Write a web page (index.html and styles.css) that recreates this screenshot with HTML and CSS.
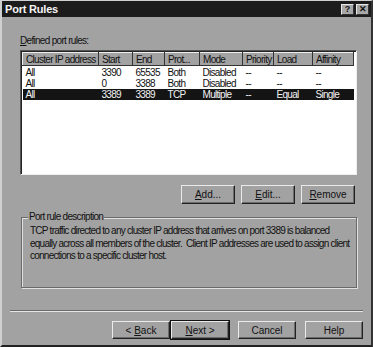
FILE: index.html
```html
<!DOCTYPE html>
<html lang="en">
  <head>
    <meta charset="UTF-8" />
    <title>Port Rules</title>
    <link rel="stylesheet" href="styles.css">
  </head>
  <body>
    <div class="dialog">
      <div class="titlebar">
        <span class="title">Port Rules</span>
        <div class="caption-buttons">
          <span class="cap-btn">?</span>
          <span class="cap-btn">&#x2715;</span>
        </div>
      </div>

      <div class="content">
        <div class="list-label"><u>D</u>efined port rules:</div>

        <!-- port rules list -->
        <div class="listbox">
          <table class="rules">
            <thead>
              <tr>
                <th class="c-ip">Cluster IP address</th>
                <th class="c-start">Start</th>
                <th class="c-end">End</th>
                <th class="c-prot">Prot...</th>
                <th class="c-mode">Mode</th>
                <th class="c-prio">Priority</th>
                <th class="c-load">Load</th>
                <th class="c-aff">Affinity</th>
              </tr>
            </thead>
            <tbody>
              <tr>
                <td>All</td><td>3390</td><td>65535</td><td>Both</td><td>Disabled</td><td>--</td><td>--</td><td>--</td>
              </tr>
              <tr>
                <td>All</td><td>0</td><td>3388</td><td>Both</td><td>Disabled</td><td>--</td><td>--</td><td>--</td>
              </tr>
              <tr class="selected">
                <td>All</td><td>3389</td><td>3389</td><td>TCP</td><td>Multiple</td><td>--</td><td>Equal</td><td>Single</td>
              </tr>
            </tbody>
          </table>
        </div>

        <div class="list-actions">
          <button class="btn"><u>A</u>dd...</button>
          <button class="btn"><u>E</u>dit...</button>
          <button class="btn"><u>R</u>emove</button>
        </div>

        <div class="group">
          <span class="group-title">Port rule description</span>
          <p>TCP traffic directed to any cluster IP address that arrives on port 3389 is balanced<br>
          equally across all members of the cluster.&nbsp; Client IP addresses are used to assign client<br>
          connections to a specific cluster host.</p>
        </div>
      </div>

      <div class="separator"></div>

      <div class="footer">
        <button class="btn wide">&lt; <u>B</u>ack</button>
        <button class="btn wide default"><u>N</u>ext &gt;</button>
        <button class="btn wide gap">Cancel</button>
        <button class="btn wide gap">Help</button>
      </div>
    </div>
  </body>
</html>
```

FILE: styles.css
```css
body {
  margin: 0;
  background: #a2a2a2;
  font-family: "Liberation Sans", Arial, sans-serif;
  font-size: 10px;
  letter-spacing: -0.7px;
  color: #111;
}

.dialog {
  width: 373px;
  height: 347px;
  box-sizing: border-box;
  background: #a2a2a2;
  border-left: 2px solid #d0d0d0;
  border-top: 1px solid #d0d0d0;
  border-bottom: 2px solid #222;
  border-right: 2px solid #333;
  display: flex;
  flex-direction: column;
}

.titlebar {
  height: 16px;
  background: #1c1c1c;
  display: flex;
  align-items: center;
  justify-content: space-between;
  padding: 0 2px 0 2px;
}

.title {
  color: #f4f4f4;
  font-weight: bold;
  font-size: 11px;
  letter-spacing: -0.2px;
  padding-left: 1px;
}

.caption-buttons {
  display: flex;
  gap: 2px;
}

.cap-btn {
  width: 13px;
  height: 11px;
  background: #a8a8a8;
  border-top: 1px solid #e8e8e8;
  border-left: 1px solid #e8e8e8;
  border-right: 1px solid #333;
  border-bottom: 1px solid #333;
  box-sizing: border-box;
  display: flex;
  align-items: center;
  justify-content: center;
  font-size: 9px;
  font-weight: bold;
  letter-spacing: 0;
  color: #111;
}

.content {
  padding: 0 14px 0 18px;
}

.list-label {
  margin-top: 18px;
  height: 15px;
  line-height: 12px;
}

.listbox {
  height: 125px;
  background: #fff;
  border-top: 1px solid #555;
  border-left: 1px solid #555;
  border-right: 1px solid #eee;
  border-bottom: 1px solid #eee;
  box-shadow: inset 1px 1px 0 #222;
  padding: 1px 0 0 1px;
  box-sizing: border-box;
  overflow: hidden;
}

.rules {
  border-collapse: collapse;
  table-layout: fixed;
  width: 331px;
}

.rules th {
  box-sizing: border-box;
  background: #a2a2a2;
  font-weight: normal;
  text-align: left;
  height: 13px;
  padding: 0 0 0 3px;
  border-top: 1px solid #eee;
  border-left: 1px solid #eee;
  border-right: 1px solid #333;
  border-bottom: 1px solid #333;
  white-space: nowrap;
  overflow: hidden;
}

.rules th.c-prio {
  text-align: right;
  padding-right: 2px;
}

.c-ip { width: 76px; }
.c-start { width: 34px; }
.c-end { width: 32px; }
.c-prot { width: 35px; }
.c-mode { width: 43px; }
.c-prio { width: 31px; }
.c-load { width: 39px; }
.c-aff { width: 41px; }

.rules td {
  height: 11px;
  line-height: 10px;
  padding: 0 0 0 3px;
  white-space: nowrap;
  overflow: hidden;
}

.rules tbody tr:first-child td {
  padding-top: 1px;
}

.rules tr.selected td {
  background: #141414;
  color: #f2f2f2;
}

.list-actions {
  display: flex;
  justify-content: flex-end;
  gap: 6px;
  margin-top: 10px;
  padding-right: 2px;
}

.btn {
  width: 54px;
  height: 19px;
  font: inherit;
  color: #111;
  background: #a2a2a2;
  border-top: 1px solid #eaeaea;
  border-left: 1px solid #eaeaea;
  border-right: 1px solid #222;
  border-bottom: 1px solid #222;
  box-shadow: inset -1px -1px 0 #6a6a6a;
  padding: 0;
}

.group {
  margin: 13px 0 0 1px;
  height: 71px;
  box-sizing: border-box;
  border: 1px solid #6a6a6a;
  box-shadow: 1px 1px 0 #e0e0e0, inset 1px 1px 0 #e0e0e0;
  padding: 0 4px 0 8px;
}

.group-title {
  display: block;
  width: fit-content;
  margin: -7px 0 0 -2px;
  padding: 0 1px;
  background: #a2a2a2;
  line-height: 12px;
}

.group p {
  margin: 2px 0 0 0;
  line-height: 12.5px;
  letter-spacing: -0.75px;
  white-space: nowrap;
}

.separator {
  margin: 22px 8px 0 8px;
  border-top: 1px solid #6a6a6a;
  border-bottom: 1px solid #e6e6e6;
}

.footer {
  display: flex;
  justify-content: flex-end;
  margin-top: 9px;
  padding-right: 8px;
}

.btn.wide {
  width: 58px;
  height: 18px;
}

.btn.default {
  outline: 1px solid #111;
  margin-left: 1px;
}

.btn.gap {
  margin-left: 9px;
}
```
